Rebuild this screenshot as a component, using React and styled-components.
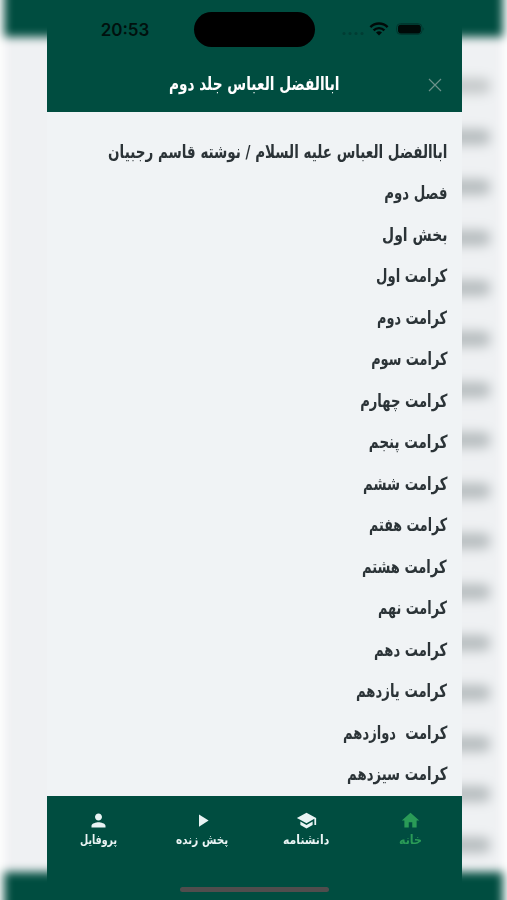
import React, { useLayoutEffect, useRef, useState } from "react";
import styled, { createGlobalStyle } from "styled-components";
import { MdPerson, MdPlayArrow, MdSchool, MdHome } from "react-icons/md";

const GlobalStyle = createGlobalStyle`
  * { box-sizing: border-box; }
  body { margin: 0; overflow: hidden; background: #fff; }
`;

const green = "#004d40";
const paper = "#f0f3f5";

const Screen = styled.div`
  display: grid;
  grid-template: 900px / 507px;
  justify-items: center;
  overflow: hidden;
  font-family: "DejaVu Sans", sans-serif;
`;

const Backdrop = styled.div`
  grid-area: 1 / 1;
  display: flex;
  flex-direction: column;
  width: 499px;
  height: 940px;
  margin-top: -20px;
  background: #eff1f3;
  filter: blur(5px);
`;

const BackdropBar = styled.div`
  flex: none;
  height: ${(p) => p.$height}px;
  background: ${green};
`;

const BackdropRows = styled.div`
  flex: 1;
  display: flex;
  flex-direction: column;
  align-items: flex-end;
  gap: 34.6px;
  padding: 41px 13px 0 0;
  overflow: hidden;
`;

const Smudge = styled.div`
  flex: none;
  width: 50px;
  height: 16px;
  border-radius: 6px;
  background: ${(p) => (p.$faint ? "#c6cacb" : "#b7bdbf")};
  filter: blur(3px);
`;

const Phone = styled.main`
  grid-area: 1 / 1;
  z-index: 1;
  display: flex;
  flex-direction: column;
  width: 415px;
  height: 900px;
  margin-left: 2px;
  background: ${paper};
`;

const Header = styled.header`
  flex: none;
  height: 111.5px;
  background: ${green};
`;

const StatusBar = styled.div`
  display: grid;
  grid-template-columns: 147px 121px 1fr;
  align-items: center;
  height: 59px;
`;

const Clock = styled.time`
  padding-left: 9px;
  text-align: center;
  font: 600 17px/20px Inter, sans-serif;
  color: #00110e;
`;

const Island = styled.div`
  height: 35px;
  border-radius: 18px;
  background: #000;
`;

const StatusIcons = styled.div`
  display: flex;
  align-items: center;
  margin-top: -2px;
  padding-left: 27px;
  color: #000a08;
  svg { display: block; }
`;

const TitleBar = styled.div`
  display: grid;
  grid-template-columns: 54px 1fr 54px;
  align-items: center;
  height: 51px;
`;

const Title = styled.h1`
  grid-column: 2;
  display: flex;
  justify-content: center;
  margin: 0;
  padding-bottom: 2px;
  font-size: 18px;
  line-height: 30px;
  color: #fff;
`;

const CloseButton = styled.button`
  display: grid;
  place-items: center;
  padding: 0;
  border: 0;
  background: none;
  color: #6b918a;
`;

const Chapters = styled.ul`
  flex: 1;
  min-height: 0;
  margin: 0;
  padding: 19px 15px 0 0;
  list-style: none;
  overflow: hidden;
`;

const Chapter = styled.li`
  display: flex;
  height: 41.5px;
  font-size: 18px;
  font-weight: 700;
  line-height: 41.5px;
  color: #2b3337;
`;

const Footer = styled.footer`
  flex: none;
  display: flex;
  flex-direction: column;
  justify-content: space-between;
  align-items: center;
  height: 104.5px;
  padding-bottom: 8px;
  background: ${green};
`;

const Tabs = styled.nav`
  display: grid;
  grid-template-columns: repeat(4, 1fr);
  width: 100%;
  padding-top: 14px;
`;

const Tab = styled.div`
  display: flex;
  flex-direction: column;
  align-items: center;
  font-size: 12.5px;
  font-weight: 700;
  line-height: 18px;
  color: ${(p) => (p.$active ? "#2a9b57" : "#e9f4f4")};
  svg { display: block; }
`;

const HomeIndicator = styled.div`
  width: 149px;
  height: 5px;
  border-radius: 3px;
  background: #504d4d;
`;

const Slot = styled.span`
  display: flex;
  justify-content: flex-start;
  width: ${(p) => p.$width}px;
  white-space: pre;
`;

const Glyphs = styled.span`
  flex: none;
  transform-origin: right center;
`;

/* Condenses a line of text so that it fills a fixed measure. */
function FittedText({ width, children }) {
  const ref = useRef(null);
  const [scale, setScale] = useState(1);
  useLayoutEffect(() => {
    setScale(width / ref.current.offsetWidth);
  }, [width, children]);
  return (
    <Slot $width={width} dir="rtl">
      <Glyphs ref={ref} style={{ transform: `scaleX(${scale})` }}>{children}</Glyphs>
    </Slot>
  );
}

const chapters = [
  ["اباالفضل العباس علیه السلام / نوشته قاسم رجبیان", 339],
  ["فصل دوم", 63],
  ["بخش اول", 65],
  ["کرامت اول", 71],
  ["کرامت دوم", 70],
  ["کرامت سوم", 76],
  ["کرامت چهارم", 87],
  ["کرامت پنجم", 79],
  ["کرامت ششم", 84],
  ["کرامت هفتم", 78],
  ["کرامت هشتم", 85],
  ["کرامت نهم", 69],
  ["کرامت دهم", 73],
  ["کرامت یازدهم", 91],
  ["کرامت  دوازدهم", 104],
  ["کرامت سیزدهم", 100],
];

const tabs = [
  { label: "پروفایل", width: 37, Icon: MdPerson },
  { label: "پخش زنده", width: 52, Icon: MdPlayArrow },
  { label: "دانشنامه", width: 46, Icon: MdSchool },
  { label: "خانه", width: 23, Icon: MdHome, active: true },
];

export default function App() {
  return (
    <>
      <GlobalStyle />
      <Screen>
        <Backdrop>
          <BackdropBar $height={57} />
          <BackdropRows>
            {chapters.map(([text], i) => <Smudge key={text} $faint={i === 0} />)}
          </BackdropRows>
          <BackdropBar $height={48} />
        </Backdrop>
        <Phone>
          <Header>
            <StatusBar>
              <Clock>20:53</Clock>
              <Island />
              <StatusIcons>
                <svg width="86" height="18" viewBox="0 0 86 18">
                  <g fill="#003d33">
                    <circle cx="2" cy="13.5" r="1.5" />
                    <circle cx="8" cy="13.5" r="1.5" />
                    <circle cx="14" cy="13.5" r="1.5" />
                    <circle cx="20" cy="13.5" r="1.5" />
                  </g>
                  <g fill="none" stroke="currentColor" strokeWidth="2.4">
                    <path d="M28.4 7.2a12 12 0 0 1 17.2 0" />
                    <path d="M31.6 10.4a7.6 7.6 0 0 1 10.8 0" />
                  </g>
                  <path d="M34 12.6a4.5 4.5 0 0 1 6 0l-3 3z" fill="currentColor" />
                  <rect x="54.6" y="3.6" width="25.5" height="10.8" rx="4" fill="none" stroke="#00362e" strokeWidth="1" />
                  <rect x="56" y="4.7" width="22.8" height="8.7" rx="2.8" fill="currentColor" />
                  <path d="M81.4 7.2q1.6 1.8 0 3.6z" fill="#00362e" />
                </svg>
              </StatusIcons>
            </StatusBar>
            <TitleBar>
              <Title><FittedText width={171}>اباالفضل العباس جلد دوم</FittedText></Title>
              <CloseButton aria-label="بستن">
                <svg width="14" height="14" viewBox="0 0 14 14" fill="none" stroke="currentColor" strokeWidth="1.2">
                  <path d="M1 1l12 12M13 1L1 13" />
                </svg>
              </CloseButton>
            </TitleBar>
          </Header>
          <Chapters dir="rtl">
            {chapters.map(([text, width]) => (
              <Chapter key={text}><FittedText width={width}>{text}</FittedText></Chapter>
            ))}
          </Chapters>
          <Footer>
            <Tabs>
              {tabs.map(({ label, width, Icon, active }) => (
                <Tab key={label} $active={active}>
                  <Icon size={21} />
                  <FittedText width={width}>{label}</FittedText>
                </Tab>
              ))}
            </Tabs>
            <HomeIndicator />
          </Footer>
        </Phone>
      </Screen>
    </>
  );
}
